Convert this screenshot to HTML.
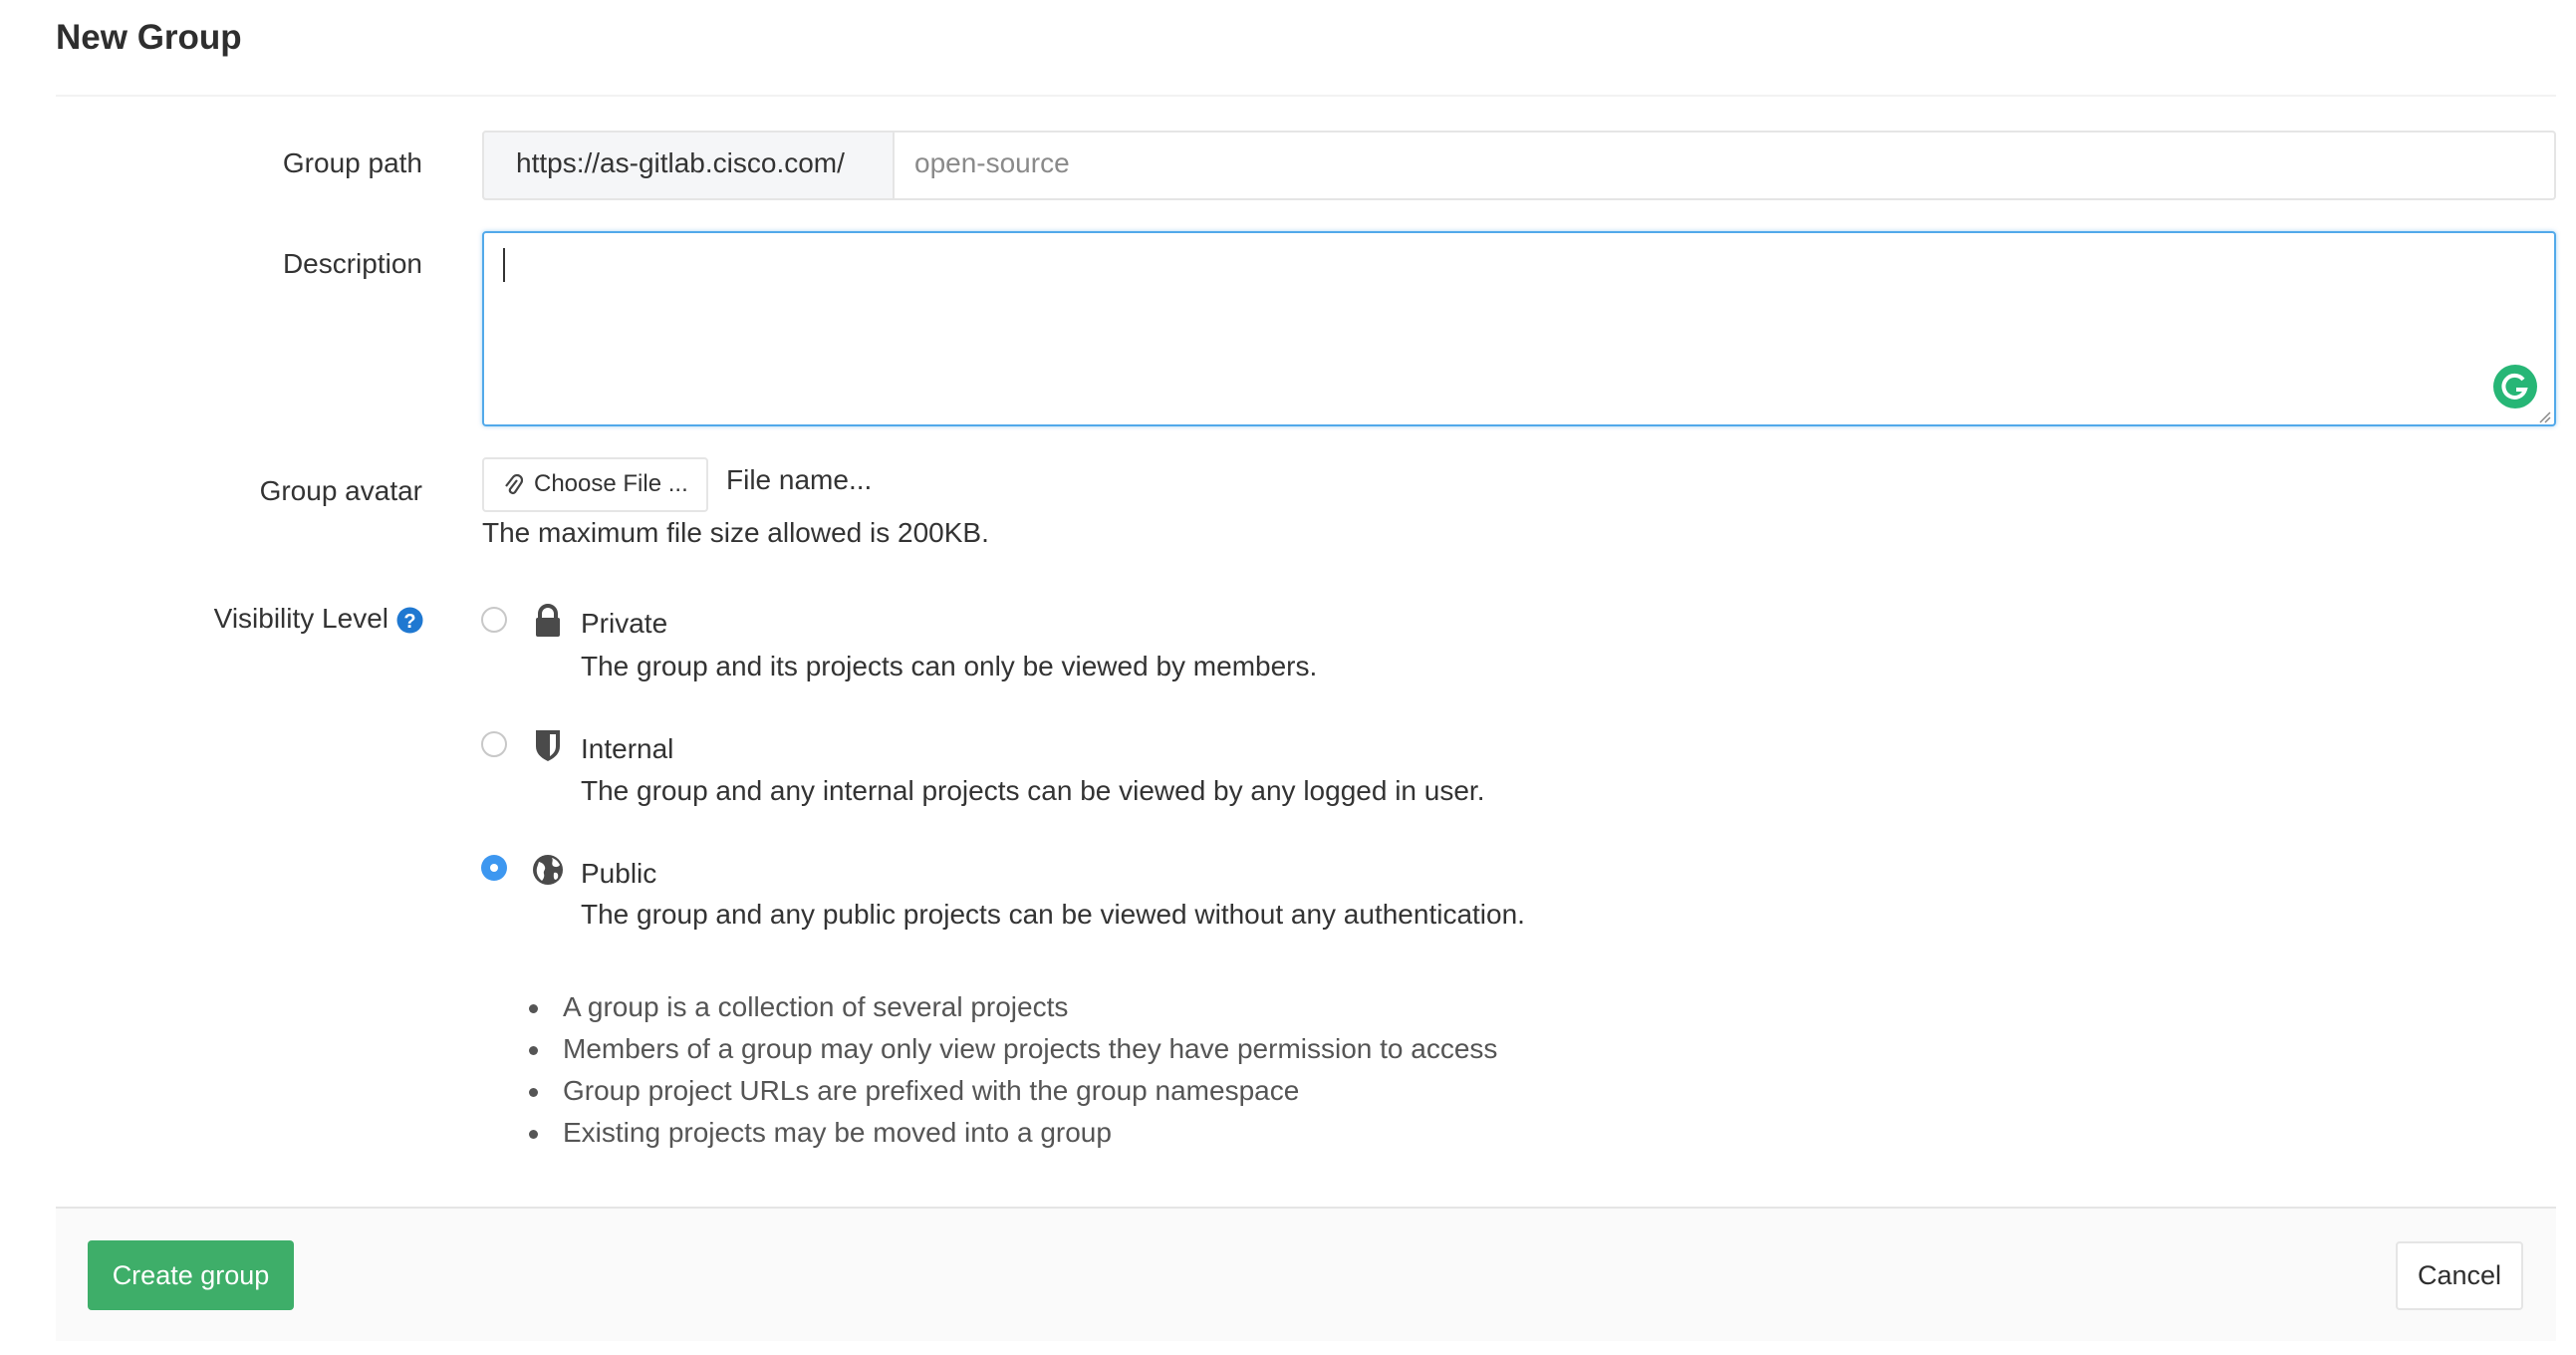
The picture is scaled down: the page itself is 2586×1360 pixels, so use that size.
<!DOCTYPE html>
<html><head><meta charset="utf-8"><style>
*{box-sizing:border-box;margin:0;padding:0}
body{width:2586px;height:1360px;background:#fff;font-family:"Liberation Sans",sans-serif;color:#2e2e2e;position:relative;overflow:hidden}
.a{position:absolute;white-space:nowrap}
.lbl{position:absolute;right:2162px;font-size:28px;color:#333;text-align:right;line-height:30px}
.t{font-size:28px;line-height:30px;color:#333}
.radio{position:absolute;width:26px;height:26px;border-radius:50%;border:2px solid #c8c8c8;background:#fff}
</style></head><body>
<div class="a" style="left:56px;top:18px;font-size:35px;font-weight:bold;color:#2e2e2e">New Group</div>
<div class="a" style="left:56px;top:95px;width:2510px;height:2px;background:#f2f2f2"></div>

<div class="lbl" style="top:149px">Group path</div>
<div class="a" style="left:484px;top:131px;width:2082px;height:70px;border:2px solid #e5e5e5;border-radius:4px"></div>
<div class="a" style="left:484px;top:131px;width:414px;height:70px;border:2px solid #e5e5e5;border-radius:4px 0 0 4px;background:#f5f6f8"></div>
<div class="a t" style="left:518px;top:149px">https://as-gitlab.cisco.com/</div>
<div class="a t" style="left:918px;top:149px;color:#8a8a8a">open-source</div>

<div class="lbl" style="top:250px">Description</div>
<div class="a" style="left:484px;top:232px;width:2082px;height:196px;border:2px solid #52a9ea;border-radius:4px;box-shadow:0 0 4px rgba(82,169,234,.5)"></div>
<div class="a" style="left:505px;top:249px;width:2px;height:34px;background:#333"></div>
<svg class="a" style="left:2502px;top:365px" width="46" height="46" viewBox="0 0 46 46"><circle cx="23" cy="23" r="22" fill="#27b676"/><path d="M31 16 A11 11 0 1 0 33 26 L24 26" fill="none" stroke="#fff" stroke-width="4"/></svg>
<svg class="a" style="left:2548px;top:412px" width="14" height="14"><path d="M2 12 L12 2 M7 12 L12 7" stroke="#888" stroke-width="1.5"/></svg>

<div class="lbl" style="top:478px">Group avatar</div>
<div class="a" style="left:484px;top:459px;width:227px;height:55px;border:2px solid #e5e5e5;border-radius:4px;background:#fff"></div>
<svg class="a" style="left:505px;top:472px" width="20" height="28" viewBox="0 0 20 28"><path d="M14 10 L7 19 a3 3 0 0 0 5 3 L18 13 a5 5 0 0 0 -8-6 L3 16" fill="none" stroke="#444" stroke-width="2.2"/></svg>
<div class="a" style="left:536px;top:472px;font-size:24px;line-height:28px;color:#333">Choose File ...</div>
<div class="a t" style="left:729px;top:467px">File name...</div>
<div class="a t" style="left:484px;top:520px">The maximum file size allowed is 200KB.</div>

<div class="lbl" style="top:606px;right:2196px">Visibility Level</div>
<svg class="a" style="left:398px;top:609px" width="27" height="27"><circle cx="13.5" cy="13.5" r="13" fill="#1f78d1"/><text x="13.5" y="21" text-anchor="middle" font-family="Liberation Sans" font-weight="bold" font-size="20" fill="#fff">?</text></svg>

<div class="radio" style="left:483px;top:609px"></div>
<svg class="a" style="left:536px;top:606px" width="28" height="34" viewBox="0 0 28 34"><path d="M6 15 V10 a8 8 0 0 1 16 0 V15" fill="none" stroke="#4a4a4a" stroke-width="4"/><rect x="2" y="14" width="24" height="19" rx="2" fill="#4a4a4a"/></svg>
<div class="a t" style="left:583px;top:611px">Private</div>
<div class="a t" style="left:583px;top:654px">The group and its projects can only be viewed by members.</div>

<div class="radio" style="left:483px;top:734px"></div>
<svg class="a" style="left:536px;top:731px" width="28" height="34" viewBox="0 0 28 34"><path d="M2 2 H26 V18 C26 26 20 30 14 33 C8 30 2 26 2 18 Z" fill="#4a4a4a"/><path d="M16 6 H22 V18 C22 23 19 26 16 28 Z" fill="#fff"/></svg>
<div class="a t" style="left:583px;top:737px">Internal</div>
<div class="a t" style="left:583px;top:779px">The group and any internal projects can be viewed by any logged in user.</div>

<div class="radio" style="left:483px;top:858px;border:none;background:#3d97f0"></div>
<div class="a" style="left:492px;top:867px;width:8px;height:8px;border-radius:50%;background:#fff"></div>
<svg class="a" style="left:534px;top:857px" width="32" height="32" viewBox="0 0 32 32"><circle cx="16" cy="16" r="15" fill="#4a4a4a"/><path d="M7 8 C10 9 12 10 13 13 C14 16 11 17 12 20 C13 23 11 26 10 27 C6 24 4 19 5 14 Z M20 4 C22 7 19 9 21 12 C24 14 27 13 28 11 C26 7 23 5 20 4 Z M22 19 C25 18 27 20 26 24 C24 27 21 27 22 19 Z" fill="#fff"/></svg>
<div class="a t" style="left:583px;top:862px">Public</div>
<div class="a t" style="left:583px;top:903px">The group and any public projects can be viewed without any authentication.</div>

<div class="a" style="left:531px;top:1008px;width:9px;height:9px;border-radius:50%;background:#555"></div>
<div class="a t" style="left:565px;top:996px;color:#555">A group is a collection of several projects</div>
<div class="a" style="left:531px;top:1050px;width:9px;height:9px;border-radius:50%;background:#555"></div>
<div class="a t" style="left:565px;top:1038px;color:#555">Members of a group may only view projects they have permission to access</div>
<div class="a" style="left:531px;top:1092px;width:9px;height:9px;border-radius:50%;background:#555"></div>
<div class="a t" style="left:565px;top:1080px;color:#555">Group project URLs are prefixed with the group namespace</div>
<div class="a" style="left:531px;top:1134px;width:9px;height:9px;border-radius:50%;background:#555"></div>
<div class="a t" style="left:565px;top:1122px;color:#555">Existing projects may be moved into a group</div>

<div class="a" style="left:56px;top:1211px;width:2510px;height:135px;background:#fafafa;border-top:2px solid #e5e5e5"></div>
<div class="a" style="left:88px;top:1245px;width:207px;height:70px;background:#3eae69;border-radius:4px;color:#fff;font-size:27px;line-height:70px;text-align:center">Create group</div>
<div class="a" style="left:2405px;top:1246px;width:128px;height:69px;background:#fff;border:2px solid #e5e5e5;border-radius:4px;color:#2e2e2e;font-size:27px;line-height:65px;text-align:center">Cancel</div>
</body></html>
